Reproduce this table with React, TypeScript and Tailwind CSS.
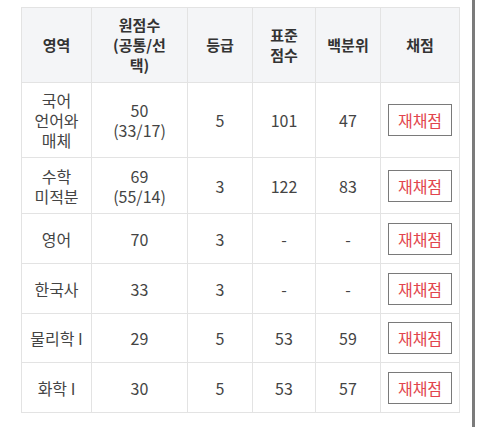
import React from "react";

type Row = {
  subject: React.ReactNode;
  raw: React.ReactNode;
  grade: string;
  std: string;
  pct: string;
  h: string;
};

const rows: Row[] = [
  { subject: <>국어<br />언어와<br />매체</>, raw: <>50<br />(33/17)</>, grade: "5", std: "101", pct: "47", h: "h-[75px]" },
  { subject: <>수학<br />미적분</>, raw: <>69<br />(55/14)</>, grade: "3", std: "122", pct: "83", h: "h-[56px]" },
  { subject: "영어", raw: "70", grade: "3", std: "-", pct: "-", h: "h-[50px]" },
  { subject: "한국사", raw: "33", grade: "3", std: "-", pct: "-", h: "h-[50px]" },
  { subject: "물리학 I", raw: "29", grade: "5", std: "53", pct: "59", h: "h-[49px]" },
  { subject: "화학 I", raw: "30", grade: "5", std: "53", pct: "57", h: "h-[50px]" },
];

const th = "border border-[#e3e3e3] font-bold text-[#333] text-[15px] align-middle text-center p-0";
const td = "border border-[#e3e3e3] text-[#444] text-[16px] align-middle text-center p-0";

export default function App() {
  return (
    <div
      className="relative w-[480px] h-[427px] bg-white overflow-hidden"
      style={{ fontFamily: '"Noto Sans CJK KR", "Noto Sans", sans-serif' }}
    >
      <div className="pl-[21px] pt-[7px]">
        <table className="table-fixed border-collapse w-[438px] leading-[20px]">
          <colgroup>
            <col className="w-[70px]" />
            <col className="w-[96px]" />
            <col className="w-[65px]" />
            <col className="w-[63px]" />
            <col className="w-[65px]" />
            <col className="w-[79px]" />
          </colgroup>
          <thead>
            <tr className="h-[75px] bg-[#f4f5f7]">
              <th className={th}>영역</th>
              <th className={th}>원점수<br />(공통/선<br />택)</th>
              <th className={th}>등급</th>
              <th className={th}>표준<br />점수</th>
              <th className={th}>백분위</th>
              <th className={th}>채점</th>
            </tr>
          </thead>
          <tbody>
            {rows.map((r, i) => (
              <tr key={i} className={r.h}>
                <td className={td}>{r.subject}</td>
                <td className={td}>{r.raw}</td>
                <td className={td}>{r.grade}</td>
                <td className={td}>{r.std}</td>
                <td className={td}>{r.pct}</td>
                <td className={td}>
                  <button className="w-[64px] h-[32px] border border-[#7a7a7a] bg-white text-[#e2454d] text-[16px] leading-none">
                    재채점
                  </button>
                </td>
              </tr>
            ))}
          </tbody>
        </table>
      </div>
      <div className="absolute left-[472px] top-0 w-[3px] h-full bg-[#7b7b7b]" />
    </div>
  );
}
